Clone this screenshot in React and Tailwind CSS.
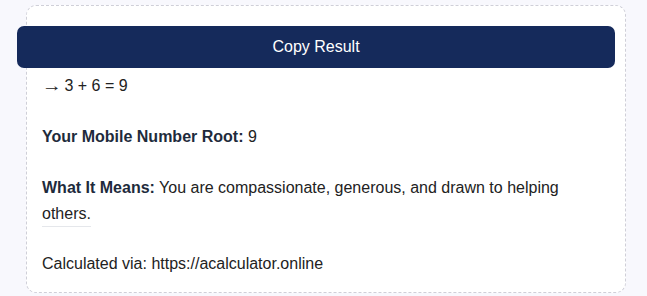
import React from 'react';

export default function App() {
  return (
    <div className="min-h-[296px] bg-[#f8f8fd] pt-[5px] pl-[26px] font-['Liberation_Sans',Arial,sans-serif] text-[16px] text-[#222]">
      <div className="w-[600px] h-[288px] rounded-[10px] border border-dashed border-[#cfcfd8] bg-white px-[15px] pt-[20px]">
        <button className="-ml-[25px] w-[598px] h-[42px] rounded-[7px] bg-[#152a5b] text-white text-[16px]">
          Copy Result
        </button>
        <div className="mt-[5px] leading-[25.6px]">
          <p>
            <span className="inline-block scale-x-125 origin-left mr-[2px]">→</span> 3 + 6 = 9
          </p>
          <p className="mt-[25px]">
            <strong className="text-[#1e2b3c]">Your Mobile Number Root:</strong> 9
          </p>
          <p className="mt-[26px] pr-[40px]">
            <strong className="text-[#1e2b3c]">What It Means:</strong> You are compassionate, generous, and drawn to helping others.
          </p>
          <div className="w-[49px] h-px bg-[#e5e7eb]" />
          <p className="mt-[24px]">Calculated via: https://acalculator.online</p>
        </div>
      </div>
    </div>
  );
}
